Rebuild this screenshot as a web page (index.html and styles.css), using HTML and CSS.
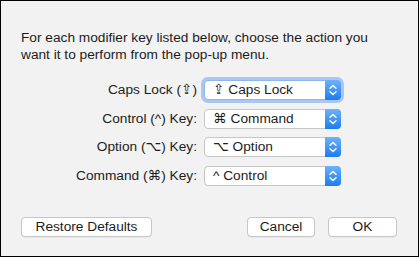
FILE: index.html
```html
<!DOCTYPE html>
<html>
<head>
<meta charset="utf-8">
<link rel="stylesheet" href="styles.css">
</head>
<body>
<div class="dialog">
  <p class="intro">For each modifier key listed below, choose the action you want it to perform from the pop-up menu.</p>
  <div class="rows">
    <div class="label">Caps Lock (⇪)</div>
    <div class="popup focused"><span class="val">⇪ Caps Lock</span><span class="arrows"><svg width="16" height="20" viewBox="0 0 16 20"><path d="M5 8.2 L8 5.4 L11 8.2 M5 11.8 L8 14.6 L11 11.8" fill="none" stroke="#fff" stroke-width="1.4" stroke-linecap="round" stroke-linejoin="round"/></svg></span></div>
    <div class="label">Control (^) Key:</div>
    <div class="popup"><span class="val">⌘ Command</span><span class="arrows"><svg width="16" height="20" viewBox="0 0 16 20"><path d="M5 8.2 L8 5.4 L11 8.2 M5 11.8 L8 14.6 L11 11.8" fill="none" stroke="#fff" stroke-width="1.4" stroke-linecap="round" stroke-linejoin="round"/></svg></span></div>
    <div class="label">Option (⌥) Key:</div>
    <div class="popup"><span class="val">⌥ Option</span><span class="arrows"><svg width="16" height="20" viewBox="0 0 16 20"><path d="M5 8.2 L8 5.4 L11 8.2 M5 11.8 L8 14.6 L11 11.8" fill="none" stroke="#fff" stroke-width="1.4" stroke-linecap="round" stroke-linejoin="round"/></svg></span></div>
    <div class="label">Command (⌘) Key:</div>
    <div class="popup"><span class="val">^ Control</span><span class="arrows"><svg width="16" height="20" viewBox="0 0 16 20"><path d="M5 8.2 L8 5.4 L11 8.2 M5 11.8 L8 14.6 L11 11.8" fill="none" stroke="#fff" stroke-width="1.4" stroke-linecap="round" stroke-linejoin="round"/></svg></span></div>
  </div>
  <div class="buttons">
    <div class="btn restore">Restore Defaults</div>
    <div class="btn cancel">Cancel</div>
    <div class="btn ok">OK</div>
  </div>
</div>
</body>
</html>
```
FILE: styles.css
```css
html, body {
  margin: 0;
  padding: 0;
}
body {
  font-family: "Liberation Sans", "DejaVu Sans", sans-serif;
  font-size: 13.7px;
  color: #1c1c1c;
}
.dialog {
  box-sizing: border-box;
  width: 419px;
  height: 257px;
  border: 1px solid #000;
  background: #f2f2f2;
  padding: 28px 21px 0 20px;
  display: flex;
  flex-direction: column;
}
.intro {
  margin: 0;
  width: 362px;
  line-height: 17px;
}
.rows {
  margin-top: 17px;
  display: grid;
  grid-template-columns: 176px 137px;
  column-gap: 7px;
  row-gap: 8.5px;
}
.label {
  text-align: right;
  line-height: 20px;
  height: 20px;
  white-space: nowrap;
}
.popup {
  box-sizing: border-box;
  height: 20px;
  background: #fff;
  border: 1px solid #c6c6c6;
  border-radius: 4px;
  display: flex;
  align-items: center;
  position: relative;
}
.popup.focused {
  box-shadow: 0 0 0 3px rgba(110, 165, 240, 0.55);
  border-color: #8fb5ea;
}
.val {
  flex: 1;
  padding-left: 8px;
  line-height: 18px;
  white-space: nowrap;
}
.arrows {
  width: 16px;
  height: 20px;
  margin: -1px -1px -1px 0;
  border-radius: 0 4px 4px 0;
  background: linear-gradient(#6db2fb, #1b7cf4);
  display: flex;
}
.buttons {
  margin-top: 31px;
  display: flex;
}
.btn {
  box-sizing: border-box;
  height: 20px;
  line-height: 18px;
  background: #fff;
  border: 1px solid #c6c6c6;
  border-radius: 4px;
  text-align: center;
  white-space: nowrap;
  box-shadow: 0 0.5px 0 rgba(0,0,0,0.08);
}
.restore {
  width: 131px;
}
.cancel {
  margin-left: auto;
  width: 68px;
}
.ok {
  margin-left: 13px;
  width: 69px;
}
```
